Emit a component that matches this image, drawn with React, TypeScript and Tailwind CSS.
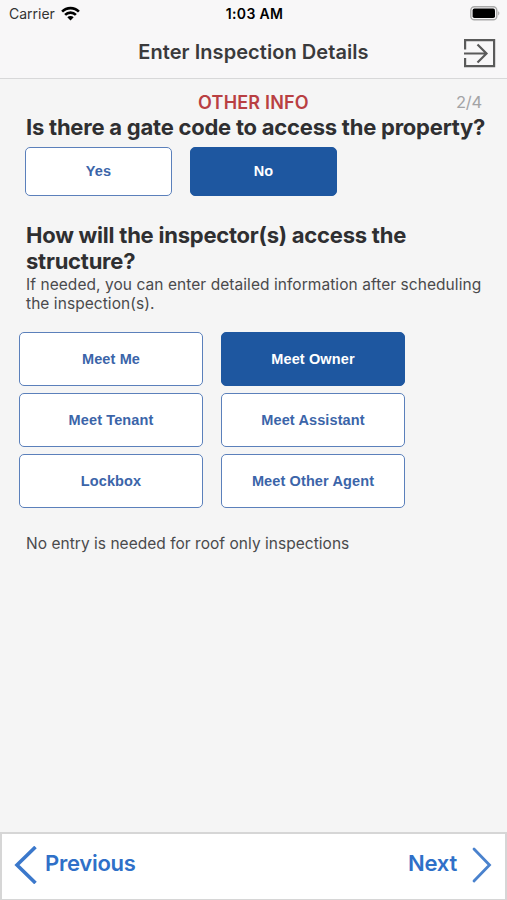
import React, { useState } from 'react';

interface OptionButtonProps {
  label: string;
  selected: boolean;
  onSelect: (label: string) => void;
  className: string;
}

const gateOptions = ['Yes', 'No'];

const accessOptions = [
  'Meet Me',
  'Meet Owner',
  'Meet Tenant',
  'Meet Assistant',
  'Lockbox',
  'Meet Other Agent'
];

const OptionButton: React.FC<OptionButtonProps> = ({ label, selected, onSelect, className }) => (
  <button
    onClick={() => onSelect(label)}
    className={`flex items-center justify-center rounded-[5px] border font-['Liberation_Sans',sans-serif] text-[14.5px] font-bold tracking-[0.12px] ${
      selected ? 'border-[#1e57a0] bg-[#1e57a0] text-white' : 'border-[#5b80bb] bg-white text-[#3b65a9]'
    } ${className}`}
  >
    {label}
  </button>
);

const StatusBar: React.FC = () => (
  <div className="grid h-7 grid-cols-3 items-center pl-[9px] pr-[7px] text-[14px] leading-5 text-black">
    <div className="flex items-center gap-[6px]">
      <span className="text-[#333]">Carrier</span>
      <svg className="-mt-[2px]" width="19" height="15" viewBox="0 0 19 15" fill="none" stroke="#000" strokeWidth="2.6">
        <path d="M1.1 5.6a11.8 11.8 0 0 1 16.8 0" />
        <path d="M4.1 8.9a7.6 7.6 0 0 1 10.8 0" />
        <path d="M9.5 14.4 6.3 11.3a4.4 4.4 0 0 1 6.4 0Z" fill="#000" stroke="none" />
      </svg>
    </div>
    <span className="text-center font-semibold tracking-[0.3px]">1:03 AM</span>
    <svg className="-mt-[2px] justify-self-end" width="30" height="15" viewBox="0 0 30 15">
      <rect x="0.8" y="0.8" width="26" height="13" rx="3.6" fill="none" stroke="#a9a9a9" strokeWidth="1.4" />
      <rect x="2.6" y="2.6" width="22.4" height="9.4" rx="1.8" fill="#000" />
      <path d="M28.2 5.2c1.6.7 1.6 3.5 0 4.2Z" fill="#a9a9a9" />
    </svg>
  </div>
);

const App: React.FC = () => {
  const [gateCode, setGateCode] = useState('No');
  const [access, setAccess] = useState('Meet Owner');

  return (
    <div className="flex h-screen flex-col bg-[#f5f5f5] font-['Inter',sans-serif] text-[#2f2f31]">
      <header className="h-[79px] border-b border-[#d8d8d9] bg-[#f8f7f8]">
        <StatusBar />
        <div className="grid h-[50px] grid-cols-[1fr_auto_1fr] items-center pr-[11px]">
          <h1 className="col-start-2 -mt-[2px] pl-[11px] text-[20px] font-semibold leading-6 tracking-[0.06px] text-[#3a3a3c]">
            Enter Inspection Details
          </h1>
          <button className="justify-self-end">
            <svg width="33" height="30" viewBox="0 0 33 30" fill="none" stroke="#5a5a5a" strokeWidth="2.2">
              <path d="M2.1 11.5V2.1h29v26h-29V20" />
              <path d="M1 15.5h22M14.5 6.5l9 9-9 9" />
            </svg>
          </button>
        </div>
      </header>

      <main className="flex-1 px-[25px] pt-[12px]">
        <div className="grid grid-cols-[1fr_auto_1fr] items-center leading-[23px]">
          <span className="col-start-2 text-[18px] font-semibold tracking-[0.2px] text-[#b93f42]">OTHER INFO</span>
          <span className="justify-self-end text-[16.5px] tracking-[-0.2px] text-[#a3a3a5]">2/4</span>
        </div>
        <h2 className="whitespace-nowrap pl-px text-[22px] font-bold leading-[26px] tracking-[-0.23px]">
          Is there a gate code to access the property?
        </h2>
        <div className="mt-[7px] flex gap-[18px]">
          {gateOptions.map((label) => (
            <OptionButton
              key={label}
              label={label}
              selected={gateCode === label}
              onSelect={setGateCode}
              className="h-[49px] w-[147px]"
            />
          ))}
        </div>

        <h2 className="mt-[26px] pl-px text-[22px] font-bold leading-[26px] tracking-[-0.23px]">
          How will the inspector(s) access the
          <br />
          structure?
        </h2>
        <p className="mt-px whitespace-nowrap pl-px text-[15.5px] leading-[19px] tracking-[0.06px] text-[#4a4a4c]">
          If needed, you can enter detailed information after scheduling
          <br />
          the inspection(s).
        </p>
        <div className="-ml-[6px] mt-[19px] grid w-fit grid-cols-2 gap-x-[18px] gap-y-[7px]">
          {accessOptions.map((label) => (
            <OptionButton
              key={label}
              label={label}
              selected={access === label}
              onSelect={setAccess}
              className="h-[54px] w-[184px] pt-px"
            />
          ))}
        </div>
        <p className="mt-[26px] pl-px text-[15.5px] leading-[19px] tracking-[0.03px] text-[#4a4a4c]">
          No entry is needed for roof only inspections
        </p>
      </main>

      <footer className="flex h-[68px] items-center justify-between border-2 border-b-[1px] border-[#d6d6d6] bg-white pb-[4px] pl-[11px] pr-[13px] text-[22px] font-semibold tracking-[-0.25px] text-[#2f70c8]">
        <button className="flex items-center gap-[7px]">
          <svg width="25" height="38" viewBox="0 0 25 38" fill="none" stroke="#3b78cb" strokeWidth="3.6">
            <path d="M22.5 1 4 19l18.5 18" />
          </svg>
          <span className="-mt-[3px]">Previous</span>
        </button>
        <button className="flex items-center gap-[15px]">
          <span className="-mt-[3px]">Next</span>
          <svg width="20" height="36" viewBox="0 0 20 36" fill="none" stroke="#4a82cd" strokeWidth="2.8" strokeLinecap="round">
            <path d="M2 2l15.5 16L2 34" />
          </svg>
        </button>
      </footer>
    </div>
  );
};

export default App;
